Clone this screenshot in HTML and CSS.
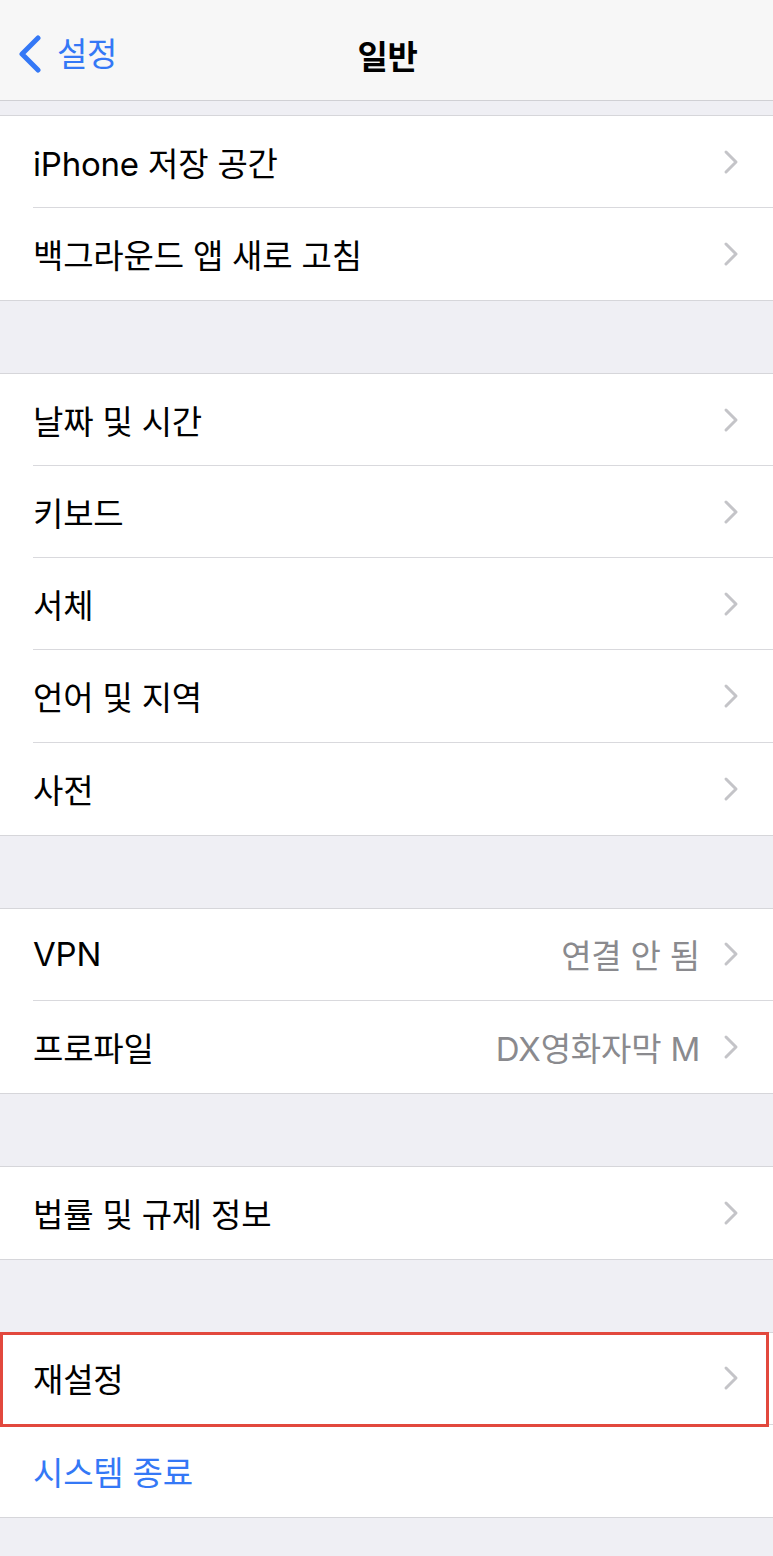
FILE: index.html
```html
<!DOCTYPE html>
<html lang="ko">
<head>
<meta charset="utf-8">
<link rel="stylesheet" href="styles.css">
</head>
<body>
<header class="nav">
  <div class="back">
    <svg class="back-icon" width="26" height="38" viewBox="0 0 26 38"><path d="M21 3 L5 19 L21 35" fill="none" stroke="#3478f6" stroke-width="5" stroke-linecap="round" stroke-linejoin="round"/></svg>
    <span class="back-label">설정</span>
  </div>
  <div class="title">일반</div>
</header>

<div class="gap gap-top"></div>
<section class="group">
  <div class="row"><div class="row-inner"><span class="label">iPhone 저장 공간</span><svg class="chev" width="16" height="26" viewBox="0 0 16 26"><path d="M3 3 L13 13 L3 23" /></svg></div></div>
  <div class="row"><div class="row-inner"><span class="label">백그라운드 앱 새로 고침</span><svg class="chev" width="16" height="26" viewBox="0 0 16 26"><path d="M3 3 L13 13 L3 23" /></svg></div></div>
</section>

<div class="gap"></div>
<section class="group">
  <div class="row"><div class="row-inner"><span class="label">날짜 및 시간</span><svg class="chev" width="16" height="26" viewBox="0 0 16 26"><path d="M3 3 L13 13 L3 23" /></svg></div></div>
  <div class="row"><div class="row-inner"><span class="label">키보드</span><svg class="chev" width="16" height="26" viewBox="0 0 16 26"><path d="M3 3 L13 13 L3 23" /></svg></div></div>
  <div class="row"><div class="row-inner"><span class="label">서체</span><svg class="chev" width="16" height="26" viewBox="0 0 16 26"><path d="M3 3 L13 13 L3 23" /></svg></div></div>
  <div class="row"><div class="row-inner"><span class="label">언어 및 지역</span><svg class="chev" width="16" height="26" viewBox="0 0 16 26"><path d="M3 3 L13 13 L3 23" /></svg></div></div>
  <div class="row"><div class="row-inner"><span class="label">사전</span><svg class="chev" width="16" height="26" viewBox="0 0 16 26"><path d="M3 3 L13 13 L3 23" /></svg></div></div>
</section>

<div class="gap"></div>
<section class="group">
  <div class="row"><div class="row-inner"><span class="label">VPN</span><span class="value">연결 안 됨</span><svg class="chev" width="16" height="26" viewBox="0 0 16 26"><path d="M3 3 L13 13 L3 23" /></svg></div></div>
  <div class="row"><div class="row-inner"><span class="label">프로파일</span><span class="value">DX영화자막 M</span><svg class="chev" width="16" height="26" viewBox="0 0 16 26"><path d="M3 3 L13 13 L3 23" /></svg></div></div>
</section>

<div class="gap"></div>
<section class="group">
  <div class="row"><div class="row-inner"><span class="label">법률 및 규제 정보</span><svg class="chev" width="16" height="26" viewBox="0 0 16 26"><path d="M3 3 L13 13 L3 23" /></svg></div></div>
</section>

<div class="gap"></div>
<section class="group">
  <div class="row highlighted"><div class="row-inner"><span class="label">재설정</span><svg class="chev" width="16" height="26" viewBox="0 0 16 26"><path d="M3 3 L13 13 L3 23" /></svg></div><div class="mark"></div></div>
  <div class="row"><div class="row-inner"><span class="label link">시스템 종료</span></div></div>
</section>
<div class="gap"></div>
</body>
</html>
```

FILE: styles.css
```css
* { box-sizing: border-box; }
html, body {
  margin: 0;
  padding: 0;
  background: #efeff4;
  font-family: "Inter", "Noto Sans CJK KR", sans-serif;
  color: #000;
}
.nav {
  height: 101px;
  background: #f7f7f7;
  border-bottom: 1px solid #d0d0d4;
  display: flex;
  align-items: center;
  justify-content: center;
  position: relative;
  padding-top: 10px;
}
.back {
  position: absolute;
  left: 17px;
  top: 35px;
  display: flex;
  align-items: center;
  gap: 14px;
}
.back-icon { display: block; }
.back-label {
  color: #3478f6;
  font-size: 33px;
  line-height: 38px;
  letter-spacing: -0.3px;
}
.title {
  font-size: 33px;
  font-weight: 700;
  letter-spacing: -0.3px;
  margin-left: 2px;
}
.gap { height: 72px; }
.gap-top { height: 14px; }
.group {
  background: #fff;
  border-top: 1px solid #d6d6da;
  border-bottom: 1px solid #d6d6da;
}
.row {
  padding-left: 33px;
  display: flex;
  position: relative;
}
.row-inner {
  flex: 1;
  height: 92.1px;
  display: flex;
  align-items: center;
  padding-right: 34px;
  border-bottom: 1px solid #d9d9dd;
}
.row:last-child .row-inner { border-bottom: none; }
.label {
  flex: 1;
  font-size: 33px;
  letter-spacing: -0.2px;
}
.label.link { color: #3478f6; }
.value {
  font-size: 33px;
  color: #8a8a8e;
  letter-spacing: -0.2px;
  margin-right: 23px;
}
.chev {
  display: block;
  fill: none;
  stroke: #c4c4c8;
  stroke-width: 3;
  stroke-linecap: round;
  stroke-linejoin: round;
}
.mark {
  position: absolute;
  left: 0;
  right: 4px;
  top: -1px;
  bottom: -2px;
  border: 3px solid #e2483d;
  pointer-events: none;
}
```
